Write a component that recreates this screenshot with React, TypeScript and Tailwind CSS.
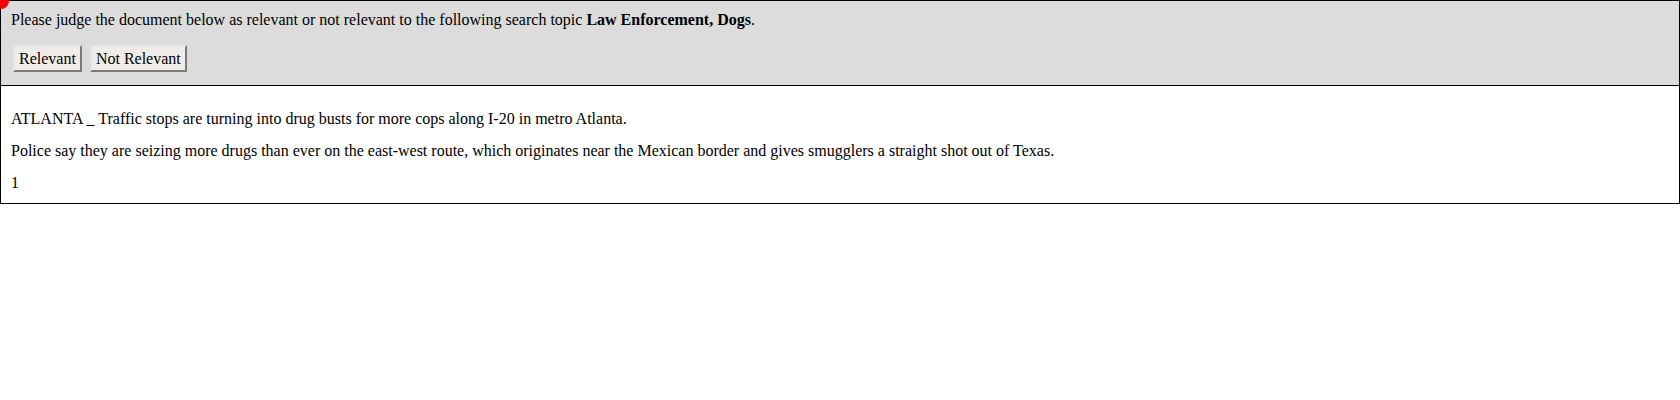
export default function App() {
  return (
    <div className="relative w-[1680px] bg-white text-black text-[16px] leading-[18px]" style={{ fontFamily: '"Liberation Serif", "Times New Roman", serif' }}>
      <div className="absolute top-[-7px] left-[-7px] w-4 h-4 rounded-full bg-[#ff0000] z-10" />
      <div className="border border-black bg-[#dcdcdc] pl-[10px] pt-[10px] pb-[13px]">
        <p>
          Please judge the document below as relevant or not relevant to the following search topic <b>Law Enforcement, Dogs</b>.
        </p>
        <div className="flex gap-[8px] mt-[16px] pl-[2px]">
          <button className="h-[27px] px-[4px] bg-[#efece8] border-2 border-t-[#e4e4e4] border-l-[#e4e4e4] border-b-[#7a7a7a] border-r-[#7a7a7a]">Relevant</button>
          <button className="h-[27px] px-[4px] bg-[#efece8] border-2 border-t-[#e4e4e4] border-l-[#e4e4e4] border-b-[#7a7a7a] border-r-[#7a7a7a]">Not Relevant</button>
        </div>
      </div>
      <div className="border border-t-0 border-black pl-[10px] pt-[24px] pb-[11px] flex flex-col gap-[14px]">
        <p>ATLANTA _ Traffic stops are turning into drug busts for more cops along I-20 in metro Atlanta.</p>
        <p>Police say they are seizing more drugs than ever on the east-west route, which originates near the Mexican border and gives smugglers a straight shot out of Texas.</p>
        <p>1</p>
      </div>
    </div>
  );
}
